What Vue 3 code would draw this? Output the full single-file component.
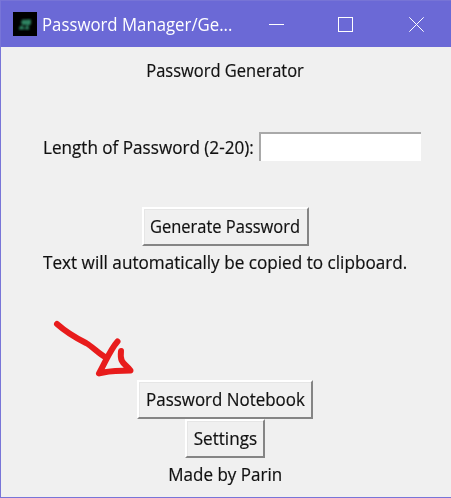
<script setup>
import { ref } from 'vue'

const length = ref('')
</script>

<template>
  <div class="window">
    <header class="titlebar">
      <svg class="app-icon" viewBox="0 0 24 24">
        <defs>
          <filter id="soft"><feGaussianBlur stdDeviation="0.8" /></filter>
        </defs>
        <rect width="24" height="24" fill="#000" />
        <g fill="#2f8362" filter="url(#soft)">
          <circle cx="11" cy="10.3" r="2.8" />
          <path d="M13 7.5h5v4.5l-2 1.5h-3z" />
          <path d="M6 17.5v-1.500l1.500-2.300h2.500l1.300 2.300v1.500zM12 17.500v-1.500l1-2h2l1.200 2v1.500z" />
        </g>
      </svg>
      <div class="title"><span class="t-title">Password Manager/Ge...</span></div>
      <div class="controls">
        <svg viewBox="0 0 15 15"><path d="M0 7.5H15" /></svg>
        <svg class="maximize" viewBox="0 0 15 15"><rect x=".5" y=".5" width="14" height="14" /></svg>
        <svg viewBox="0 0 15 15"><path d="M.3.3 14.7 14.7M14.7.3.3 14.7" /></svg>
      </div>
    </header>
    <main class="body">
      <div class="line heading"><span class="t-heading">Password Generator</span></div>
      <div class="field">
        <label for="length"><span class="t-length">Length of Password (2-20):</span></label>
        <input id="length" v-model="length" type="text" />
      </div>
      <button class="generate"><span class="t-generate">Generate Password</span></button>
      <div class="line hint"><span class="t-hint">Text will automatically be copied to clipboard.</span></div>
      <button class="notebook"><span class="t-notebook">Password Notebook</span></button>
      <button class="settings"><span class="t-settings">Settings</span></button>
      <div class="line credit"><span class="t-credit">Made by Parin</span></div>
    </main>
    <svg class="arrow" viewBox="45 310 100 80">
      <path d="M57 324C66 332 76 338 86 343C93 347 98 353 105 357M117.500 341.500C110 350 106 361 99 373.500C108 370.500 121 371 130.500 370.500C125 363 119.500 364 121 351" />
    </svg>
  </div>
</template>

<style>
body {
  margin: 0;
  overflow: hidden;
}
</style>

<style scoped>
.window {
  position: relative;
  box-sizing: border-box;
  width: 451px;
  height: 498px;
  border-left: 1px solid #7875d8;
  border-bottom: 1px solid #7875d8;
  background: #f0f0f0;
  color: #111;
  font: 18px/24px "Open Sans", "Noto Sans", sans-serif;
}
span {
  display: inline-block;
  white-space: nowrap;
  transform-origin: center;
}
.t-title {
  transform: scaleX(0.932);
}
.t-heading {
  transform: scaleX(0.915);
}
.t-length {
  transform: scaleX(0.95);
}
.t-generate {
  transform: scaleX(0.915);
}
.t-hint {
  transform: scaleX(0.953);
}
.t-notebook {
  transform: scaleX(0.94);
}
.t-settings {
  transform: scaleX(0.95);
}
.t-credit {
  transform: scaleX(0.945);
}
.titlebar {
  box-sizing: border-box;
  display: flex;
  align-items: center;
  height: 47px;
  padding: 0 27px 0 12px;
  border-top: 1px solid #7774d6;
  background: #6b69d6;
  color: #fff;
}
.app-icon {
  width: 24px;
  height: 24px;
}
.title {
  width: 190px;
  margin-left: 5px;
}
.title span {
  transform-origin: left;
}
.controls {
  display: flex;
  width: 155px;
  margin-left: auto;
}
.controls svg {
  width: 15px;
  height: 15px;
  fill: none;
  stroke: #fff;
  stroke-width: 1;
}
.controls .maximize {
  margin: 0 56px 0 54px;
}
.body {
  display: flex;
  flex-direction: column;
  align-items: center;
  padding-right: 2px;
  -webkit-text-stroke: 0.2px #111;
}
.line {
  display: flex;
  justify-content: center;
  height: 24px;
}
.heading {
  margin-top: 11px;
}
.field {
  display: flex;
  align-items: center;
  align-self: stretch;
  height: 29px;
  margin-top: 50px;
  padding-left: 42px;
}
label {
  flex: none;
  width: 216px;
}
label span {
  transform-origin: left;
}
input {
  box-sizing: border-box;
  flex: none;
  width: 162px;
  height: 29px;
  padding: 0 4px;
  border: 0 solid #a9a9a9;
  border-width: 2px 0 0 2px;
  background: #fff;
  font: inherit;
  outline: 0;
}
button {
  box-sizing: border-box;
  display: flex;
  align-items: center;
  justify-content: center;
  height: 39px;
  padding: 0 0 1px;
  border: 2px solid;
  border-color: #fff #858585 #858585 #fff;
  background: #f0f0f0;
  box-shadow: inset 1px 1px #e6e6e6;
  color: inherit;
  font: inherit;
}
.generate {
  width: 167px;
  margin-top: 46px;
}
.hint {
  margin-top: 4px;
}
.notebook {
  width: 176px;
  margin-top: 106px;
}
.settings {
  width: 80px;
}
.credit {
  margin-top: 4px;
}
.arrow {
  position: absolute;
  left: 44px;
  top: 310px;
  width: 100px;
  height: 80px;
  fill: none;
  stroke: #e81c1c;
  stroke-width: 6;
  stroke-linecap: round;
  stroke-linejoin: round;
}
</style>
